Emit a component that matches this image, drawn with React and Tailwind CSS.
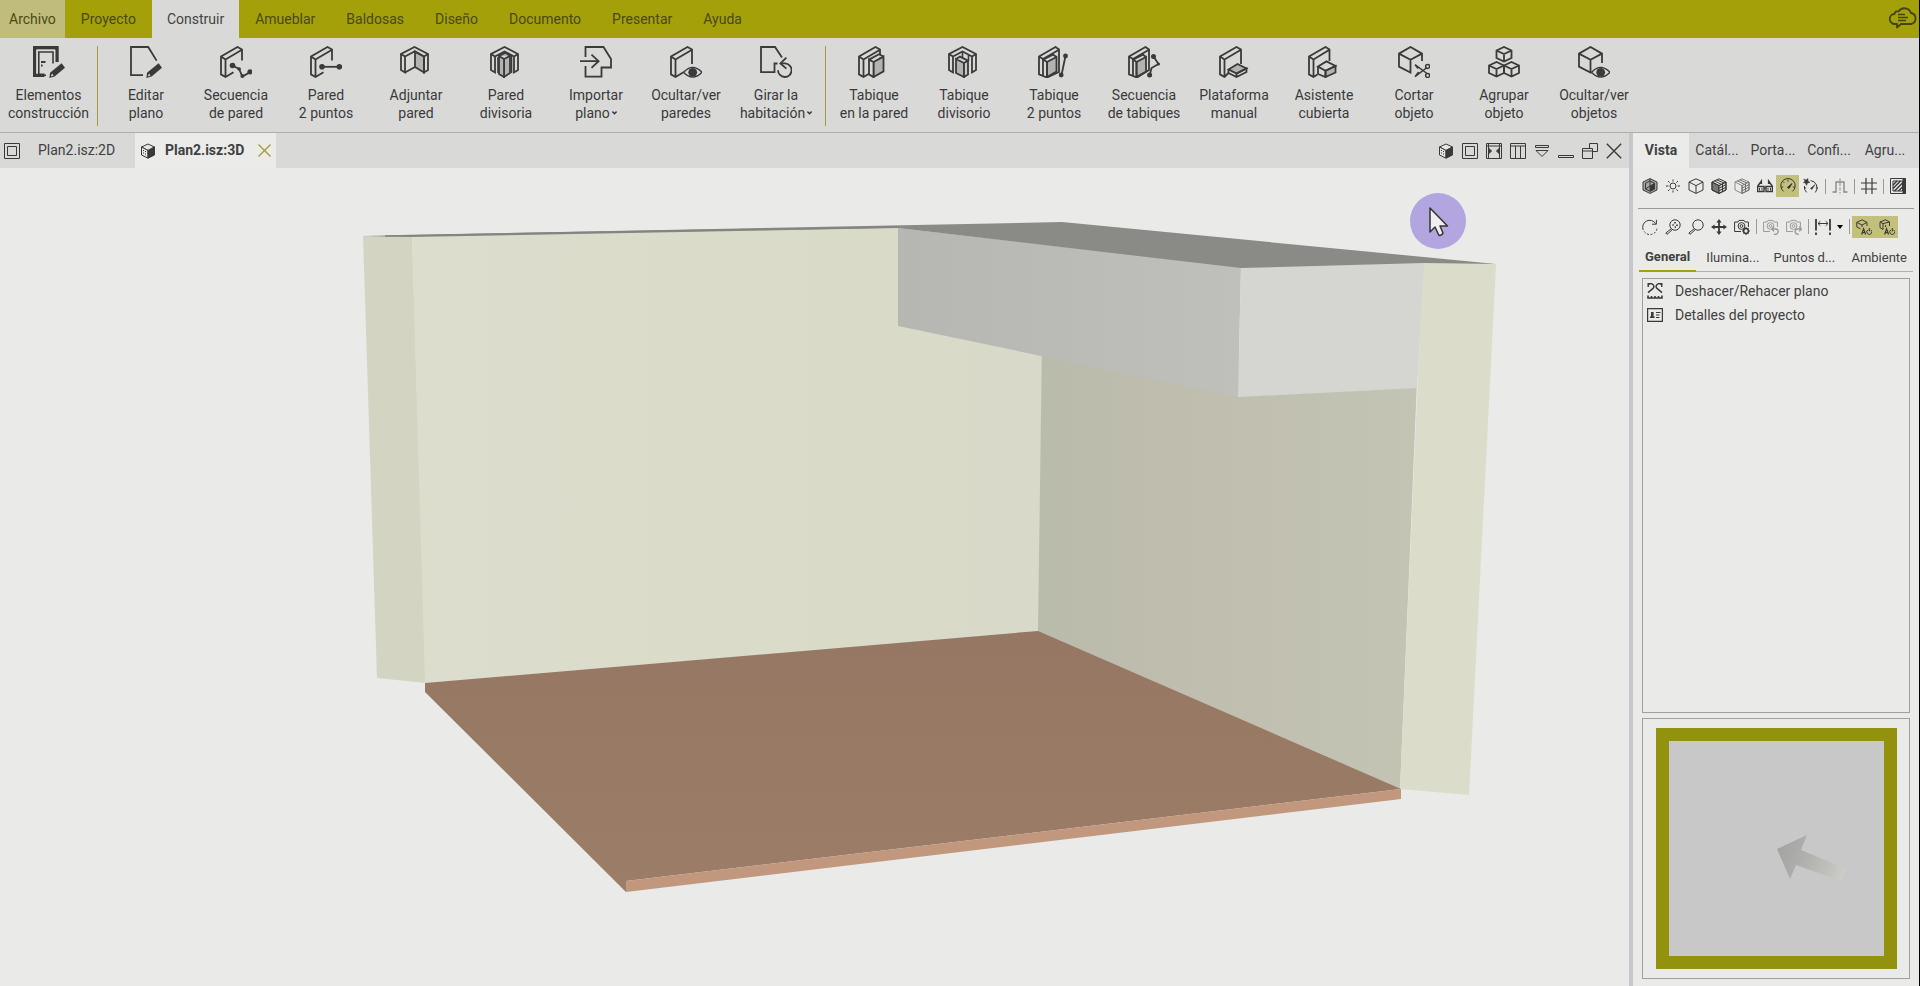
import { useState } from 'react'

const MENU = ['Archivo', 'Proyecto', 'Construir', 'Amueblar', 'Baldosas', 'Diseño', 'Documento', 'Presentar', 'Ayuda']

const DARK = '#3a3a3a'
const GREY = '#b3b3b1'

/* ---------- piezas comunes de los iconos ---------- */

function Icon({ children, size = 32, width = 1.8 }) {
  return (
    <svg width={size} height={size} viewBox={`0 0 ${size} ${size}`} fill="none" stroke={DARK} strokeWidth={width} aria-hidden="true">
      {children}
    </svg>
  )
}

const Pencil = () => (
  <>
    <path d="M28.6 17.2L32 21.8L21.6 30.4L16.4 32L17 26.8Z" fill={DARK} stroke="none" />
    <path d="M19 27.6L20.6 29.6L17.8 30.6Z" fill="#d9d9d8" stroke="none" />
  </>
)

const Wall = () => (
  <path d="M13.5 26.2L5.5 31L1 28.4V10.5L17.5 1L22 3.5V14.5M5.5 31V13.5M1 10.5L5.5 13.5L22 3.8" />
)

const Eye = () => (
  <>
    <path d="M13.5 26.3Q22.7 16.5 32 26.3Q22.7 36 13.5 26.3Z" fill="#d9d9d8" strokeWidth="1.4" />
    <circle cx="22.7" cy="26.3" r="4.4" fill={DARK} stroke="none" />
  </>
)

const Corner = () => (
  <path d="M1 8V24L5 26.5V10.5L1 8L14.5 1L28 8V24L24 26.5V10.5L28 8M5 10.5L14.5 5.4L24 10.5" />
)

const Cube = ({ x, y }) => (
  <g transform={`translate(${x} ${y})`}>
    <path d="M0 4.5L7.5 1L15 4.5V12L7.5 15.6L0 12ZM0 4.5L7.5 8L15 4.5M7.5 8V15.6" />
  </g>
)

/* ---------- iconos de la cinta ---------- */

const RIBBON_ICONS = {
  elementos: (
    <>
      <path d="M11.5 29.2H1.6V1.8H24V16" strokeWidth="3.4" />
      <path d="M13 29.2H5.8V6H20V17.5" strokeWidth="1.6" />
      <path d="M8 16H12.5M8 19.5H9.6" strokeWidth="1.8" />
      <path d="M3.8 28V4H21.8V16" stroke="#d9d9d8" strokeWidth="0.8" />
      <Pencil />
    </>
  ),
  editar: (
    <>
      <path d="M13 29.2H1V1H18.2L26.6 14.6" />
      <Pencil />
    </>
  ),
  secuencia: (
    <>
      <Wall />
      <path d="M12.5 19.5L19 23L22.4 30.5L31 25.6" />
      <g fill={DARK} stroke="none">
        <circle cx="12.5" cy="19.5" r="2.8" />
        <circle cx="19.2" cy="23" r="1.8" />
        <circle cx="22.4" cy="30" r="2" />
        <circle cx="30" cy="25.8" r="2.6" />
      </g>
    </>
  ),
  puntos: (
    <>
      <Wall />
      <path d="M12 20.8H30" />
      <g fill={DARK} stroke="none">
        <circle cx="12" cy="20.8" r="2.8" />
        <circle cx="29.4" cy="20.8" r="2.8" />
      </g>
    </>
  ),
  adjuntar: (
    <>
      <path d="M15 5.4L24 10.5V26.5L15 21Z" fill={GREY} />
      <Corner />
      <path d="M5 26.5L15 21" />
    </>
  ),
  divisoria: (
    <>
      <Corner />
      <path d="M8 11V27M21.5 8.6V27M18.5 7V24" strokeWidth="1.6" />
      <path d="M14 13L20 10V27L14 31Z" fill={GREY} />
      <path d="M9 10L14 13V31L9 28ZM9 10L15.5 6.6L20 10" fill={GREY} />
    </>
  ),
  importar: (
    <>
      <path d="M5.5 11V1H23.5L31 13V21.5H21.5V30.6H5.5V20" />
      <path d="M0 15.2H18M11.5 8.6L18.6 15.2L11.5 21.8" />
    </>
  ),
  verParedes: (
    <>
      <Wall />
      <path d="M22 14V18" />
      <Eye />
    </>
  ),
  girar: (
    <>
      <path d="M22 11.5L15 1H1V26.2H14.5V17.5H17.5" />
      <path d="M21 17.4H25A6.8 6.8 0 1 1 18 24.2" />
      <path d="M26.4 11.6L20.4 17.4L26.4 22.6" />
    </>
  ),
  tabiquePared: (
    <>
      <Wall />
      <path d="M15.5 16L25.5 10.6V25.4L15.5 31Z" fill={GREY} />
      <path d="M11 13.6L15.5 16V31L11 28.4ZM11 13.6L21 8.2L25.5 10.6" fill="#d9d9d8" />
    </>
  ),
  tabiqueDivisorio: (
    <>
      <Corner />
      <path d="M14.5 5V12M20.5 9V15" strokeWidth="1.6" />
      <path d="M8 13L16 17V31L8 27Z" fill={GREY} />
      <path d="M16 17L20 14.6V28.6L16 31ZM8 13L12 10.6L20 14.6" fill="#c9c9c7" />
    </>
  ),
  tabiquePuntos: (
    <>
      <path d="M1 10.5L17.5 1L21 3.5V26L9 31.5L1 28.4ZM1 10.5L5 13L21 3.8M5 13V30" />
      <path d="M9 16L18.5 11V25.5L9 31Z" fill={GREY} />
      <path d="M5 13.6L9 16V31M5 13.6L15 8.6L18.5 11" />
      <path d="M27.5 10L23.5 29" />
      <g fill={DARK} stroke="none">
        <circle cx="27.5" cy="10" r="2.4" />
        <circle cx="23.2" cy="29" r="2.4" />
      </g>
    </>
  ),
  secuenciaTabiques: (
    <>
      <path d="M1 10.5L17.5 1L21 3.5V24L9 31.5L1 28.4ZM1 10.5L5 13L21 3.8M5 13V30" />
      <path d="M8.5 16L18 11V25.5L8.5 31Z" fill={GREY} />
      <path d="M5 13.6L8.5 16V31M5 13.6L15 8.6L18 11" />
      <path d="M25.5 10.5L30.5 18L23.5 22L21.8 29" />
      <g fill={DARK} stroke="none">
        <circle cx="25.5" cy="10.5" r="2.5" />
        <circle cx="30.4" cy="18" r="1.6" />
        <circle cx="21.6" cy="29" r="2.5" />
      </g>
    </>
  ),
  plataforma: (
    <g transform="translate(1 0)">
      <path d="M10 26.5L5.5 31L1 28.4V10.5L17.5 1L22 3.5V18M5.5 31V13.5M1 10.5L5.5 13.5L22 3.8" />
      <path d="M9.5 23.4L18.5 18L27.5 22.4L17.5 27.6Z" fill={GREY} />
      <path d="M9.5 23.4V27L17.5 31L27.5 26V22.4L17.5 27.6V31" />
    </g>
  ),
  cubierta: (
    <>
      <path d="M9.5 28.5L5.5 31L1 28.4V10.5L17.5 1L21.5 3.5V15M5.5 31V13.5M1 10.5L5.5 13.5L21.5 3.8" />
      <path d="M17.5 24.8L27.5 20V26.5L17.5 31Z" fill={GREY} />
      <path d="M10 20.6L18.5 15.4L27.5 20L17.5 24.8ZM10 20.6V28L17.5 31V24.8" />
    </>
  ),
  cortar: (
    <>
      <path d="M24 15V7.6L12.5 1L1 7.6V20.6L12.5 26.6V13.8L1 7.6M12.5 13.8L24 7.6" />
      <g strokeWidth="1.5">
        <path d="M17 18.6L29 27.5M17 30.6L29 21.5M17 18.6L20 22.5M17 30.6L20.6 26" />
        <circle cx="29.6" cy="20.4" r="2" />
        <circle cx="29.6" cy="29.4" r="2" />
      </g>
    </>
  ),
  agrupar: (
    <>
      <Cube x={8.5} y={0} />
      <Cube x={1} y={15} />
      <Cube x={16} y={15} />
    </>
  ),
  verObjetos: (
    <>
      <path d="M24 17V7.6L12.5 1L1 7.6V20.6L12.5 26.6V13.8L1 7.6M12.5 13.8L24 7.6" />
      <Eye />
    </>
  ),
}

const PAREDES = [
  { icon: 'editar', lines: ['Editar', 'plano'] },
  { icon: 'secuencia', lines: ['Secuencia', 'de pared'] },
  { icon: 'puntos', lines: ['Pared', '2 puntos'] },
  { icon: 'adjuntar', lines: ['Adjuntar', 'pared'] },
  { icon: 'divisoria', lines: ['Pared', 'divisoria'] },
  { icon: 'importar', lines: ['Importar', 'plano'], menu: true },
  { icon: 'verParedes', lines: ['Ocultar/ver', 'paredes'] },
  { icon: 'girar', lines: ['Girar la', 'habitación'], menu: true },
]

const OBJETOS = [
  { icon: 'tabiquePared', lines: ['Tabique', 'en la pared'] },
  { icon: 'tabiqueDivisorio', lines: ['Tabique', 'divisorio'] },
  { icon: 'tabiquePuntos', lines: ['Tabique', '2 puntos'] },
  { icon: 'secuenciaTabiques', lines: ['Secuencia', 'de tabiques'] },
  { icon: 'plataforma', lines: ['Plataforma', 'manual'] },
  { icon: 'cubierta', lines: ['Asistente', 'cubierta'] },
  { icon: 'cortar', lines: ['Cortar', 'objeto'] },
  { icon: 'agrupar', lines: ['Agrupar', 'objeto'] },
  { icon: 'verObjetos', lines: ['Ocultar/ver', 'objetos'] },
]

function RibbonButton({ icon, lines, menu, wide }) {
  return (
    <button className={`${wide ? 'w-[97px]' : 'w-[90px]'} shrink-0 flex flex-col items-center gap-2 pt-2 text-[14px] leading-[18px] text-[#3a3a3a]`}>
      <Icon>{RIBBON_ICONS[icon]}</Icon>
      <span className="flex flex-col items-center whitespace-nowrap">
        <span>{lines[0]}</span>
        <span className="flex items-center gap-0.5">
          {lines[1]}
          {menu && (
            <svg width="5" height="4" viewBox="0 0 5 4" fill="none" stroke={DARK} strokeWidth="1.4" aria-hidden="true">
              <path d="M0.4 0.6L2.5 2.8L4.6 0.6" />
            </svg>
          )}
        </span>
      </span>
    </button>
  )
}

const Divider = () => <div className="w-px h-20 mt-2 shrink-0 bg-[#a39b3c]" />

/* ---------- iconos pequeños ---------- */

const SolidCube = () => (
  <>
    <path d="M8 1L14.5 4L8 7.5L1.5 4Z" fill="#e6e6e4" />
    <path d="M1.5 4V12L8 15.2V7.5Z" fill="#e6e6e4" />
    <path d="M8 7.5L14.5 4V12L8 15.2Z" fill={DARK} />
    <path d="M3.5 7V12M5.5 8V13" strokeDasharray="1 1.5" />
  </>
)

const Camera = () => (
  <>
    <path d="M7 12.5H0.6V3H4L5 1.4H10L11 3H14.4V8" />
    <circle cx="7.5" cy="7" r="3.4" />
    <circle cx="7.5" cy="7" r="1.4" />
  </>
)

const SMALL = {
  frame: <path d="M0.5 0.5H15.5V15.5H0.5ZM3.5 3.5H12.5V12.5H3.5Z" />,
  cube3d: <SolidCube />,
  fit: (
    <>
      <path d="M0.5 0.5H15.5V15.5H0.5ZM2.5 0.5V15.5M13.5 0.5V15.5M0.5 3H15.5" />
      <path d="M2.5 5L5.5 8L2.5 11ZM13.5 5L10.5 8L13.5 11Z" fill={DARK} />
    </>
  ),
  columns: <path d="M0.5 0.5H15.5V15.5H0.5ZM0.5 3H15.5M5.5 3V15.5M10.5 3V15.5" />,
  collapse: <path d="M1.5 2.5H14.5V4.5H1.5ZM2 7.5H14L8 13.5Z" />,
  minimize: <path d="M0.5 12.5H15.5V14.5H0.5Z" />,
  restore: <path d="M0.5 5.5H10.5V15.5H0.5ZM0.5 8H10.5M7.5 5.5V0.5H15.5V8.5H10.5" />,
  close: <path d="M0.8 0.8L15.2 15.2M15.2 0.8L0.8 15.2" strokeWidth="1.4" />,

  room: (
    <>
      <path d="M8 0.6L15 4V12L8 15.4L1 12V4Z" fill="#a5a5a3" />
      <path d="M8 3L12.5 5.2V11L8 13.2L3.5 11V5.2ZM8 1V8M3.5 11L8 8" />
      <path d="M8 8L12.5 5.6V11L8 13.2Z" fill={DARK} />
    </>
  ),
  sun: (
    <>
      <circle cx="8" cy="8" r="3" />
      <path d="M8 1.5V3.5M8 12.5V14.5M1 8H3.4M12.6 8H15M3 3L4.6 4.6M11.4 11.4L13 13M13 3L11.4 4.6M4.6 11.4L3 13" />
    </>
  ),
  wire: <path d="M8 0.8L15 4V12L8 15.4L1 12V4ZM1 4L8 7.6L15 4M8 7.6V15.4" />,
  brick: (
    <>
      <path d="M1 4L8 7.6V15.4L1 12Z" fill="#777775" />
      <path d="M8 7.6L15 4V12L8 15.4Z" fill="#d5d5d3" />
      <path d="M8 0.8L15 4V12L8 15.4L1 12V4ZM1 4L8 7.6L15 4M3.4 2.8L10.5 6.4M5.8 1.8L13 5M8 10.2L15 6.6M8 12.8L15 9.2M11.5 6V13.6" />
    </>
  ),
  brickLight: (
    <>
      <path d="M8 0.8L15 4V12L8 15.4L1 12V4ZM1 4L8 7.6V15.4" stroke="#8a8a88" />
      <path d="M8 7.6L15 4V12L8 15.4ZM3.4 2.8L10.5 6.4M5.8 1.8L13 5M8 10.2L15 6.6M8 12.8L15 9.2M11.5 6V13.6" stroke="#6e6e6c" />
    </>
  ),
  glasses: (
    <>
      <path d="M0.6 8.5H7V13.5H0.6ZM9 8.5H15.4V13.5H9ZM7 10H9M0.8 8L4.4 3V6M15.2 8L11.6 3V6" strokeWidth="1.4" />
      <path d="M2.5 10V12.5M5 10V12.5M11 10V12.5M13.5 10V12.5" />
    </>
  ),
  gauge: (
    <>
      <path d="M3.6 13.4A7.2 7.2 0 1 1 12.4 13.4" />
      <path d="M7.4 9.4L12 5.6L9 10.4Z" fill={DARK} />
      <path d="M3.2 9H1M4.4 5L3 3.6M8 3.6V1.6M12.8 9H15" />
    </>
  ),
  gaugeStar: (
    <>
      <path d="M3.6 14.4A7.2 7.2 0 0 1 1.4 8M7.5 2.6A7.2 7.2 0 0 1 12.4 14.4" />
      <path d="M7.4 10.4L12 6.6L9 11.4ZM0.6 1L3 2L5 0.4L5 3L7 4.4L4.4 5L3.6 7.4L2.4 5L0.4 4.6L2 3Z" fill={DARK} strokeWidth="0.5" />
      <path d="M3.2 10H1M12.8 10H15" />
    </>
  ),
  profile: (
    <>
      <path d="M0.5 14H4V4H8M15.5 14H12V4H8" stroke="#8a8a88" strokeWidth="1.4" />
      <path d="M8 0.5V15.5" stroke="#8a8a88" strokeDasharray="3 1.5" />
    </>
  ),
  grid: <path d="M5 0V16M11 0V16M0 5H16M0 11H16" strokeWidth="1.2" />,
  hatch: (
    <>
      <path d="M0.5 0.5H15.5V15.5H0.5ZM3 3H12.5V13H3Z" />
      <path d="M14 0.5V15.5" strokeWidth="3" />
      <path d="M3 7L7 3M3 10.5L10.5 3M4.5 13L12.5 5M8.5 13L12.5 9" strokeWidth="1.5" />
    </>
  ),

  orbit: (
    <>
      <path d="M1.2 11A7 7 0 0 1 13.6 4.6M14.4 0.8V5.2H10" />
      <path d="M2.2 12.5A7 7 0 0 0 15 8.5" strokeDasharray="2 1.6" />
    </>
  ),
  zoomWin: (
    <>
      <circle cx="10" cy="6" r="5.2" />
      <path d="M6.4 9.6L0.8 14L2 15.4L7.4 10.6" />
      <path d="M10 3V4.4M7.4 6H8.8M12 5.6V7M9.6 8H11" strokeWidth="1.6" />
    </>
  ),
  zoom: (
    <>
      <circle cx="10" cy="6" r="5.2" />
      <path d="M6.4 9.6L0.8 14L2 15.4L7.4 10.6" />
    </>
  ),
  move: (
    <>
      <path d="M8 2V14M2 8H14" strokeWidth="1.8" />
      <path d="M8 0L10.6 3.6H5.4ZM8 16L10.6 12.4H5.4ZM0 8L3.6 5.4V10.6ZM16 8L12.4 5.4V10.6Z" fill={DARK} stroke="none" />
    </>
  ),
  camGear: (
    <>
      <Camera />
      <circle cx="12" cy="12" r="2.4" strokeWidth="1.5" />
      <path d="M12 8V9.4M12 14.6V16M8 12H9.4M14.6 12H16M9.4 9.4L10.2 10.2M13.8 13.8L14.6 14.6M14.6 9.4L13.8 10.2M10.2 13.8L9.4 14.6" />
    </>
  ),
  camUndo: (
    <g stroke="#9b9b99">
      <Camera />
      <path d="M9 10H13.5A2.6 2.6 0 0 1 11 15M11 7.6L8.8 10L11 12.4" strokeWidth="1.4" />
    </g>
  ),
  camRedo: (
    <g stroke="#9b9b99">
      <Camera />
      <path d="M15.4 10H11A2.6 2.6 0 0 0 12.6 15M13.2 7.6L15.4 10L13.2 12.4" strokeWidth="1.4" />
    </g>
  ),
  measure: (
    <>
      <path d="M1 0V11.5M15 0V11.5M1 13.5V16M15 13.5V16" strokeWidth="1.8" />
      <path d="M3 4.5H13M5.4 2.2L3 4.5L5.4 6.8M10.6 2.2L13 4.5L10.6 6.8" />
    </>
  ),
  cubeAuto: (
    <>
      <path d="M4.5 9.8L0.8 8V3.4L6 0.8L11 3.4V7M0.8 3.4L6 6L11 3.4M6 6V8" />
      <path d="M5.6 15.5L7.6 9.8L9.6 15.5M6.4 13.6H8.8" strokeWidth="1.2" />
      <path d="M12 10.8A2.5 2.5 0 1 0 14.6 10.8M13.3 9V12.4" />
    </>
  ),
  wallAuto: (
    <>
      <path d="M4 10.5L1 8.6V3L6.6 0.8L10.5 3V7M1 3L4 4.6V10.5M4 4.6L10.5 3M6.6 6V8" />
      <path d="M5.6 15.5L7.6 9.8L9.6 15.5M6.4 13.6H8.8" strokeWidth="1.2" />
      <path d="M12 10.8A2.5 2.5 0 1 0 14.6 10.8M13.3 9V12.4" />
    </>
  ),
  undoPlan: (
    <>
      <path d="M1 12.5V15H15V12.5M4.5 13V15M8 13V15M11.5 13V15" strokeWidth="1.6" />
      <path d="M1 9.6L6 5.4A2.6 2.6 0 0 0 2 1.6M4.4 0.4H1.2V4M15 9.6L10 5.4A2.6 2.6 0 0 1 14 1.6M11.6 0.4H14.8V4" strokeWidth="1.4" />
    </>
  ),
  details: (
    <>
      <path d="M0.6 1.6H15.4V14.4H0.6Z" strokeWidth="1.2" />
      <path d="M3 11V9.4H4V5H6.6V9.4H7.6V11Z" fill={DARK} stroke="none" />
      <path d="M9 5.5H13.5M9 8H12.5M9 10.5H12.5" strokeWidth="1.2" />
    </>
  ),
}

const SmallIcon = ({ name }) => <Icon size={16} width={1}>{SMALL[name]}</Icon>

const Sep = () => <div className="w-1.5 h-[15px] flex justify-center"><div className="w-px bg-[#9a9a98]" /></div>

function Tool({ name, label, active }) {
  return (
    <button aria-label={label} className={`w-[23px] h-[22px] flex items-center justify-center ${active ? 'bg-[#c3c07c]' : ''}`}>
      <SmallIcon name={name} />
    </button>
  )
}

/* ---------- vista 3D ---------- */

function Scene() {
  return (
    <svg className="w-full h-full" viewBox="0 168 1629 818" preserveAspectRatio="xMidYMin meet" role="img" aria-label="Vista 3D de la habitación">
      <defs>
        <linearGradient id="soffit" x1="0" x2="1">
          <stop offset="0" stopColor="#b6b7b3" />
          <stop offset="1" stopColor="#bfc0bb" />
        </linearGradient>
        <linearGradient id="right" x1="0" x2="1">
          <stop offset="0" stopColor="#b9bbab" />
          <stop offset="0.35" stopColor="#bfbdae" />
          <stop offset="1" stopColor="#c3c4b4" />
        </linearGradient>
        <linearGradient id="back" x1="0" x2="1">
          <stop offset="0" stopColor="#dcddcd" />
          <stop offset="0.5" stopColor="#dbdbc9" />
          <stop offset="1" stopColor="#d9d9c9" />
        </linearGradient>
        <linearGradient id="floor" x1="0" y1="0" x2="0" y2="1">
          <stop offset="0" stopColor="#957763" />
          <stop offset="1" stopColor="#9c7d67" />
        </linearGradient>
      </defs>
      <polygon points="363,236 412,236 426,683 377,678" fill="#d3d5c2" />
      <polygon points="412,236 898,227 1043,300 1039,632 425,683" fill="url(#back)" />
      <polygon points="1042,340 1417,380 1400,790 1038,632" fill="url(#right)" />
      <polygon points="1423,262 1496,264 1469,795 1400,789" fill="#dcdcca" />
      <polygon points="898,228 1241,267 1238,397 898,326" fill="url(#soffit)" />
      <polygon points="1241,267 1424,262 1417,388 1238,397" fill="#d5d5d2" />
      <polygon points="363,236 1062,222 1496,264 1424,263 1241,268 898,228 411,237" fill="#8a8a87" />
      <polyline points="385,236 898,227" fill="none" stroke="#83837f" strokeWidth="1.5" />
      <polygon points="425,683 1038,631 1401,789 626,881 626,892 425,692" fill="url(#floor)" />
      <polygon points="626,881 1401,789 1401,799 626,892" fill="#c1987e" />
      {/* puntero */}
      <circle cx="1438" cy="221" r="28" fill="#b3a6e0" />
      <path d="M1430 208V232L1435 227L1439 235.500Q1442 235.500 1443 233L1440 226H1447.500Z" fill="#efefef" stroke="#333" strokeWidth="1.5" strokeLinejoin="round" />
    </svg>
  )
}

function Compass() {
  return (
    <svg className="w-full h-full" viewBox="0 0 215 215" role="img" aria-label="Orientación de la cámara">
      <defs>
        <linearGradient id="fade" gradientUnits="userSpaceOnUse" x1="108" y1="108" x2="178" y2="136">
          <stop offset="0" stopColor="#a3a3a1" />
          <stop offset="0.4" stopColor="#b0b0ae" />
          <stop offset="0.7" stopColor="#bfbfba" />
          <stop offset="1" stopColor="#cfcfcb" />
        </linearGradient>
      </defs>
      <path d="M108 108L138 94L132 109L178 128L172 140L127 124L121 138Z" fill="url(#fade)" />
    </svg>
  )
}

const WINDOW_TOOLS = [
  ['cube3d', 'Vista 3D'],
  ['frame', 'Vista 2D'],
  ['fit', 'Ajustar'],
  ['columns', 'Columnas'],
  ['collapse', 'Plegar'],
  ['minimize', 'Minimizar'],
  ['restore', 'Restaurar'],
  ['close', 'Cerrar'],
]

const VIEW_TOOLS = [
  ['room', 'Habitación'],
  ['sun', 'Luz'],
  ['wire', 'Alámbrico'],
  ['brick', 'Texturas'],
  ['brickLight', 'Texturas suaves'],
  ['glasses', 'Gafas 3D'],
]

const NAV_TOOLS = [
  ['orbit', 'Orbitar'],
  ['zoomWin', 'Zoom ventana'],
  ['zoom', 'Zoom'],
  ['move', 'Desplazar'],
  ['camGear', 'Ajustes de cámara'],
]

function SidePanel() {
  const [tab, setTab] = useState('Vista')
  return (
    <aside className="w-[290px] shrink-0 flex flex-col border-l-4 border-[#c5c8ca] bg-[#eaeae9]">
      <div className="h-[35px] flex bg-[#d9d9d9] text-[14px]">
        {['Vista', 'Catál...', 'Porta...', 'Confi...', 'Agru...'].map(t => (
          <button key={t} onClick={() => setTab(t)}
            className={`w-14 ${t === tab ? 'bg-[#ebebe9] font-bold' : ''}`}>
            {t}
          </button>
        ))}
      </div>

      <div className="mx-[5px] h-[41px] flex items-center pb-1 border-b border-[#9a9a98]">
        {VIEW_TOOLS.map(([name, label]) => <Tool key={name} name={name} label={label} />)}
        <Tool name="gauge" label="Rendimiento" active />
        <Tool name="gaugeStar" label="Rendimiento avanzado" />
        <Sep />
        <Tool name="profile" label="Perfil" />
        <Sep />
        <Tool name="grid" label="Cuadrícula" />
        <Sep />
        <Tool name="hatch" label="Tramado" />
      </div>

      <div className="mx-[5px] h-[35px] flex items-center">
        {NAV_TOOLS.map(([name, label]) => <Tool key={name} name={name} label={label} />)}
        <Sep />
        <Tool name="camUndo" label="Cámara anterior" />
        <Tool name="camRedo" label="Cámara siguiente" />
        <Sep />
        <Tool name="measure" label="Medir" />
        <button aria-label="Más medidas" className="w-3 flex justify-center">
          <svg width="6" height="4" viewBox="0 0 6 4" aria-hidden="true"><path d="M0 0H6L3 4Z" /></svg>
        </button>
        <Sep />
        <Tool name="cubeAuto" label="Objetos automáticos" active />
        <Tool name="wallAuto" label="Paredes automáticas" active />
      </div>

      <div className="mx-1.5 h-7 flex justify-between border-b border-[#b0b0ae] text-[13px]">
        <button className="h-7 px-1.5 border-b-2 border-[#a3a00a] font-bold">General</button>
        <button className="px-1">Ilumina...</button>
        <button className="px-1">Puntos d...</button>
        <button className="px-1.5">Ambiente</button>
      </div>

      <ul className="mt-1.5 mx-[9px] flex-1 border border-[#9fa0a2] text-[14px]">
        <li>
          <button className="h-6 px-1 flex items-center gap-3"><SmallIcon name="undoPlan" />Deshacer/Rehacer plano</button>
        </li>
        <li>
          <button className="h-6 px-1 flex items-center gap-3"><SmallIcon name="details" />Detalles del proyecto</button>
        </li>
      </ul>

      <div className="mt-[5px] mb-[7px] mx-[9px] pl-[13px] pr-3 py-[9px] border border-[#9fa0a2]">
        <div className="aspect-square border-[13px] border-[#92920f] bg-[#c8c8c8]">
          <Compass />
        </div>
      </div>
    </aside>
  )
}

export default function App() {
  const [menu, setMenu] = useState('Construir')

  return (
    <div className="h-screen flex flex-col overflow-hidden border-r border-black bg-[#d9d9d8] text-[#414141] font-['Roboto',sans-serif]">

      {/* Menú principal */}
      <nav className="h-[38px] shrink-0 flex gap-px bg-[#a3a00a] text-[14px] text-[#4b4914]">
        {MENU.map(item => (
          <button key={item} onClick={() => setMenu(item)}
            className={`${item === 'Archivo' ? 'px-[9px] bg-[#bfbc7c]' : 'px-[15px]'} ${item === menu ? 'bg-[#d9d9d8] text-[#444444]' : ''}`}>
            {item}
          </button>
        ))}
        <button aria-label="Nube" className="ml-auto mr-0.5 pb-1">
          <svg width="28" height="24" viewBox="0 0 28 24" fill="none" stroke="#45430f" strokeWidth="1.8" aria-hidden="true">
            <path d="M7 19H6A5 5 0 0 1 5.500 9Q6 5.500 9.500 6.500A7 7 0 0 1 22 8A5.600 5.600 0 0 1 22 19H12L8 22.500V19Z" strokeLinejoin="round" />
            <path d="M9 9.500H16M9 12.500H19M9 15.500H17" strokeWidth="1.400" />
          </svg>
        </button>
      </nav>

      {/* Cinta */}
      <div className="h-[95px] shrink-0 flex border-b border-[#aeaeac]">
        <RibbonButton icon="elementos" lines={['Elementos', 'construcción']} wide />
        <Divider />
        <div className="flex ml-[3px]">
          {PAREDES.map(b => <RibbonButton key={b.icon} {...b} />)}
        </div>
        <div className="w-1" />
        <Divider />
        <div className="flex ml-[3px]">
          {OBJETOS.map(b => <RibbonButton key={b.icon} {...b} />)}
        </div>
      </div>

      <div className="flex-1 min-h-0 flex">
        <main className="flex-1 min-w-0 flex flex-col">
          {/* Pestañas de documento */}
          <div className="h-[35px] shrink-0 flex items-center text-[14px]">
            <button className="w-[135px] h-full px-1 flex items-center gap-[18px]">
              <SmallIcon name="frame" />
              Plan2.isz:2D
            </button>
            <div className="h-full px-[5px] flex items-center gap-2 bg-[#ebebe9]">
              <button className="flex items-center gap-[9px] font-bold"><SmallIcon name="cube3d" />Plan2.isz:3D</button>
              <button aria-label="Cerrar pestaña" className="ml-1.5">
                <svg width="13" height="13" viewBox="0 0 13 13" stroke="#a39a35" strokeWidth="1.300" aria-hidden="true">
                  <path d="M0.500 0.500L12.500 12.500M12.500 0.500L0.500 12.500" />
                </svg>
              </button>
            </div>
            <div className="ml-auto mr-[7px] flex gap-2">
              {WINDOW_TOOLS.map(([name, label]) => (
                <button key={name} aria-label={label}><SmallIcon name={name} /></button>
              ))}
            </div>
          </div>
          <div className="flex-1 min-h-0 bg-[#eaeae9]">
            <Scene />
          </div>
        </main>
        <SidePanel />
      </div>
    </div>
  )
}
